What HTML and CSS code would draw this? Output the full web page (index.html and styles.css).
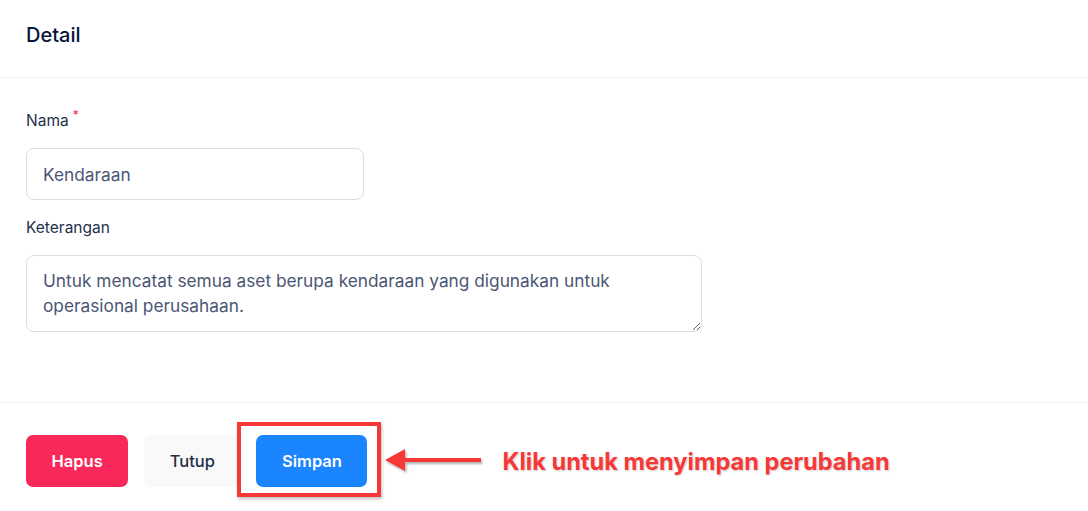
FILE: index.html
```html
<!DOCTYPE html>
<html lang="id">
<head>
<meta charset="utf-8">
<title>Detail</title>
<link rel="stylesheet" href="styles.css">
</head>
<body>
<div class="card">
  <div class="card-header">
    <h3 class="card-title">Detail</h3>
  </div>
  <div class="card-body">
    <div class="field">
      <label class="form-label required">Nama</label>
      <input class="form-control input-short" type="text" value="Kendaraan">
    </div>
    <div class="field">
      <label class="form-label">Keterangan</label>
      <textarea class="form-control textarea">Untuk mencatat semua aset berupa kendaraan yang digunakan untuk operasional perusahaan.</textarea>
    </div>
  </div>
  <div class="card-footer">
    <button class="btn btn-danger">Hapus</button>
    <button class="btn btn-light">Tutup</button>
    <div class="highlight-wrap">
      <button class="btn btn-primary">Simpan</button>
      <span class="highlight-box"></span>
    </div>
    <svg class="arrow" width="98" height="30" viewBox="0 0 98 30" aria-hidden="true">
      <defs>
        <filter id="sh" x="-10%" y="-40%" width="130%" height="190%">
          <feDropShadow dx="1.5" dy="2" stdDeviation="1.2" flood-color="#000" flood-opacity="0.3"/>
        </filter>
      </defs>
      <g filter="url(#sh)">
        <rect x="18" y="12" width="78" height="4" fill="#f73838"/>
        <polygon points="0,14 20,3 20,25" fill="#f73838"/>
      </g>
    </svg>
    <span class="annotation">Klik untuk menyimpan perubahan</span>
  </div>
</div>
</body>
</html>
```

FILE: styles.css
```css
* { box-sizing: border-box; }

html, body {
  margin: 0;
  padding: 0;
  background: #ffffff;
  font-family: Inter, "Noto Sans", "Liberation Sans", sans-serif;
}

.card {
  width: 1088px;
  height: 511px;
  background: #ffffff;
  display: flex;
  flex-direction: column;
}

.card-header {
  height: 78px;
  flex: none;
  padding: 23px 26px 0;
  border-bottom: 1px solid #f1f1f4;
}

.card-title {
  margin: 0;
  font-size: 20px;
  line-height: 24px;
  font-weight: 500;
  color: #071437;
}

.card-body {
  flex: none;
  padding: 33px 26px 0;
  height: 325px;
  border-bottom: 1px solid #f1f1f4;
}

.field + .field {
  margin-top: 18px;
}

.form-label {
  display: block;
  font-size: 15.5px;
  line-height: 20px;
  height: 20px;
  color: #252f4a;
  margin-bottom: 17px;
}

.form-label.required::after {
  content: "*";
  color: #f8285a;
  font-size: 12px;
  line-height: 0;
  vertical-align: 7px;
  margin-left: 4px;
}

.form-control {
  display: block;
  font-family: inherit;
  font-size: 17.3px;
  line-height: 24px;
  color: #4b5675;
  background: #ffffff;
  border: 1px solid #dbdfe9;
  border-radius: 8px;
  padding: 12px 16px;
  outline: none;
}

.input-short {
  width: 338px;
  height: 52px;
}

.textarea {
  width: 676px;
  height: 77px;
  resize: vertical;
  padding-top: 12px;
  line-height: 25px;
}

.card-footer {
  display: flex;
  align-items: center;
  gap: 16px;
  padding: 32px 26px 0;
}

.btn {
  height: 52px;
  padding: 0 25.5px;
  border: none;
  border-radius: 7px;
  font-family: inherit;
  font-size: 16.5px;
  font-weight: 600;
  cursor: pointer;
}

.btn-danger {
  background: #f8285a;
  color: #ffffff;
}

.btn-light {
  background: #f9f9f9;
  color: #252f4a;
  font-weight: 500;
}

.btn-primary {
  background: #1b84ff;
  color: #ffffff;
}

.highlight-wrap {
  position: relative;
  display: flex;
}

.highlight-box {
  position: absolute;
  left: -19px;
  top: -13px;
  width: 144px;
  height: 75px;
  border: 4px solid #f73838;
  box-shadow: 1px 2px 3px rgba(0, 0, 0, 0.25);
  pointer-events: none;
}

.arrow {
  margin-left: 2px;
  display: block;
}

.annotation {
  margin-left: 3px;
  font-size: 23.6px;
  font-weight: 700;
  color: #f73838;
  text-shadow: 1px 1px 2px rgba(0, 0, 0, 0.2);
  white-space: nowrap;
}
```
